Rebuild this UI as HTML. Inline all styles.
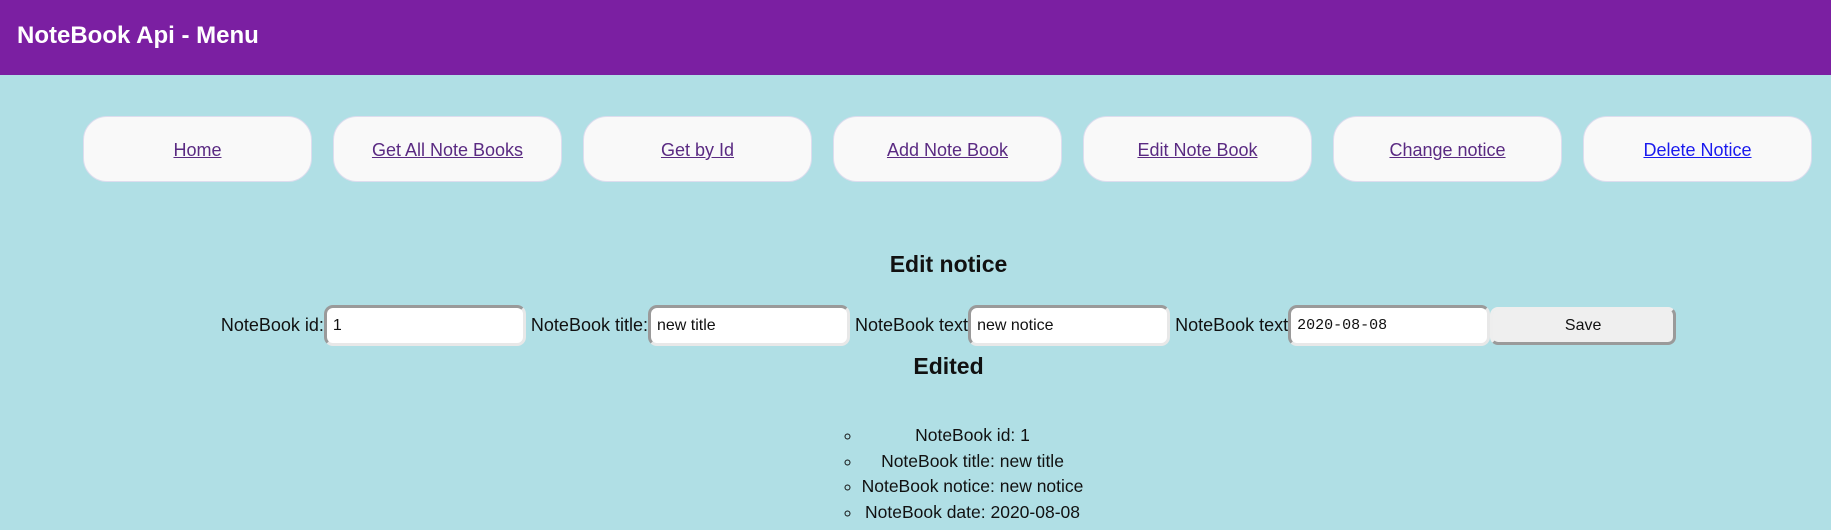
<!DOCTYPE html>
<html><head><style>
html,body{margin:0;padding:0;}
body{width:1831px;height:530px;overflow:hidden;background:#b0dfe5;font-family:"Liberation Sans",Arial,sans-serif;color:#111;}
.hdr{height:75px;background:#7b1fa2;color:#fff;font-weight:bold;font-size:24px;line-height:72px;padding-left:17px;}
.wrap{margin-left:66px;width:1765px;text-align:center;}
.nav{position:relative;height:190px;}
.nav a{position:absolute;top:41px;width:229px;height:66px;line-height:66px;background:#f9f9f9;border:1px solid #dde;border-radius:24px;color:#5a2a82;font-size:18px;text-decoration:underline;box-sizing:border-box;}
h2{margin:0;font-size:23px;font-weight:bold;}
.form{margin-top:27px;font-size:18px;height:42px;white-space:nowrap;}
.form span{vertical-align:middle;}
.inp{display:inline-block;vertical-align:middle;width:202px;height:41px;box-sizing:border-box;background:#fff;border:3px solid #9a9a9a;border-right-color:#e8e8e8;border-bottom-color:#e8e8e8;border-radius:9px;text-align:left;padding-left:6px;line-height:35px;font-size:16px;}
.mono{font-family:"Liberation Mono",monospace;font-size:15px;}
.btn{display:inline-block;vertical-align:middle;width:186px;height:38px;box-sizing:border-box;background:#efefef;border:3px solid #9a9a9a;border-top-color:#eee;border-left-color:#eee;border-radius:8px;line-height:32px;font-size:16px;}
ul{display:inline-block;margin:43px 0 0;padding-left:48px;list-style:circle;font-size:17.5px;line-height:25.5px;text-align:center;}
</style></head><body>
<div class="hdr">NoteBook Api - Menu</div>
<div class="wrap">
<div class="nav">
<a style="left:17px">Home</a>
<a style="left:267px">Get All Note Books</a>
<a style="left:517px">Get by Id</a>
<a style="left:767px">Add Note Book</a>
<a style="left:1017px">Edit Note Book</a>
<a style="left:1267px">Change notice</a>
<a style="left:1517px;color:#1a1aee">Delete Notice</a>
</div>
<h2 style="margin-top:-14px">Edit notice</h2>
<div class="form"><span>NoteBook id:</span><span class="inp">1</span> <span>NoteBook title:</span><span class="inp">new title</span> <span>NoteBook text</span><span class="inp">new notice</span> <span>NoteBook text</span><span class="inp mono">2020-08-08</span><span class="btn">Save</span></div>
<h2 style="margin-top:6px">Edited</h2>
<ul>
<li>NoteBook id: 1</li>
<li>NoteBook title: new title</li>
<li>NoteBook notice: new notice</li>
<li>NoteBook date: 2020-08-08</li>
</ul>
</div>
</body></html>
